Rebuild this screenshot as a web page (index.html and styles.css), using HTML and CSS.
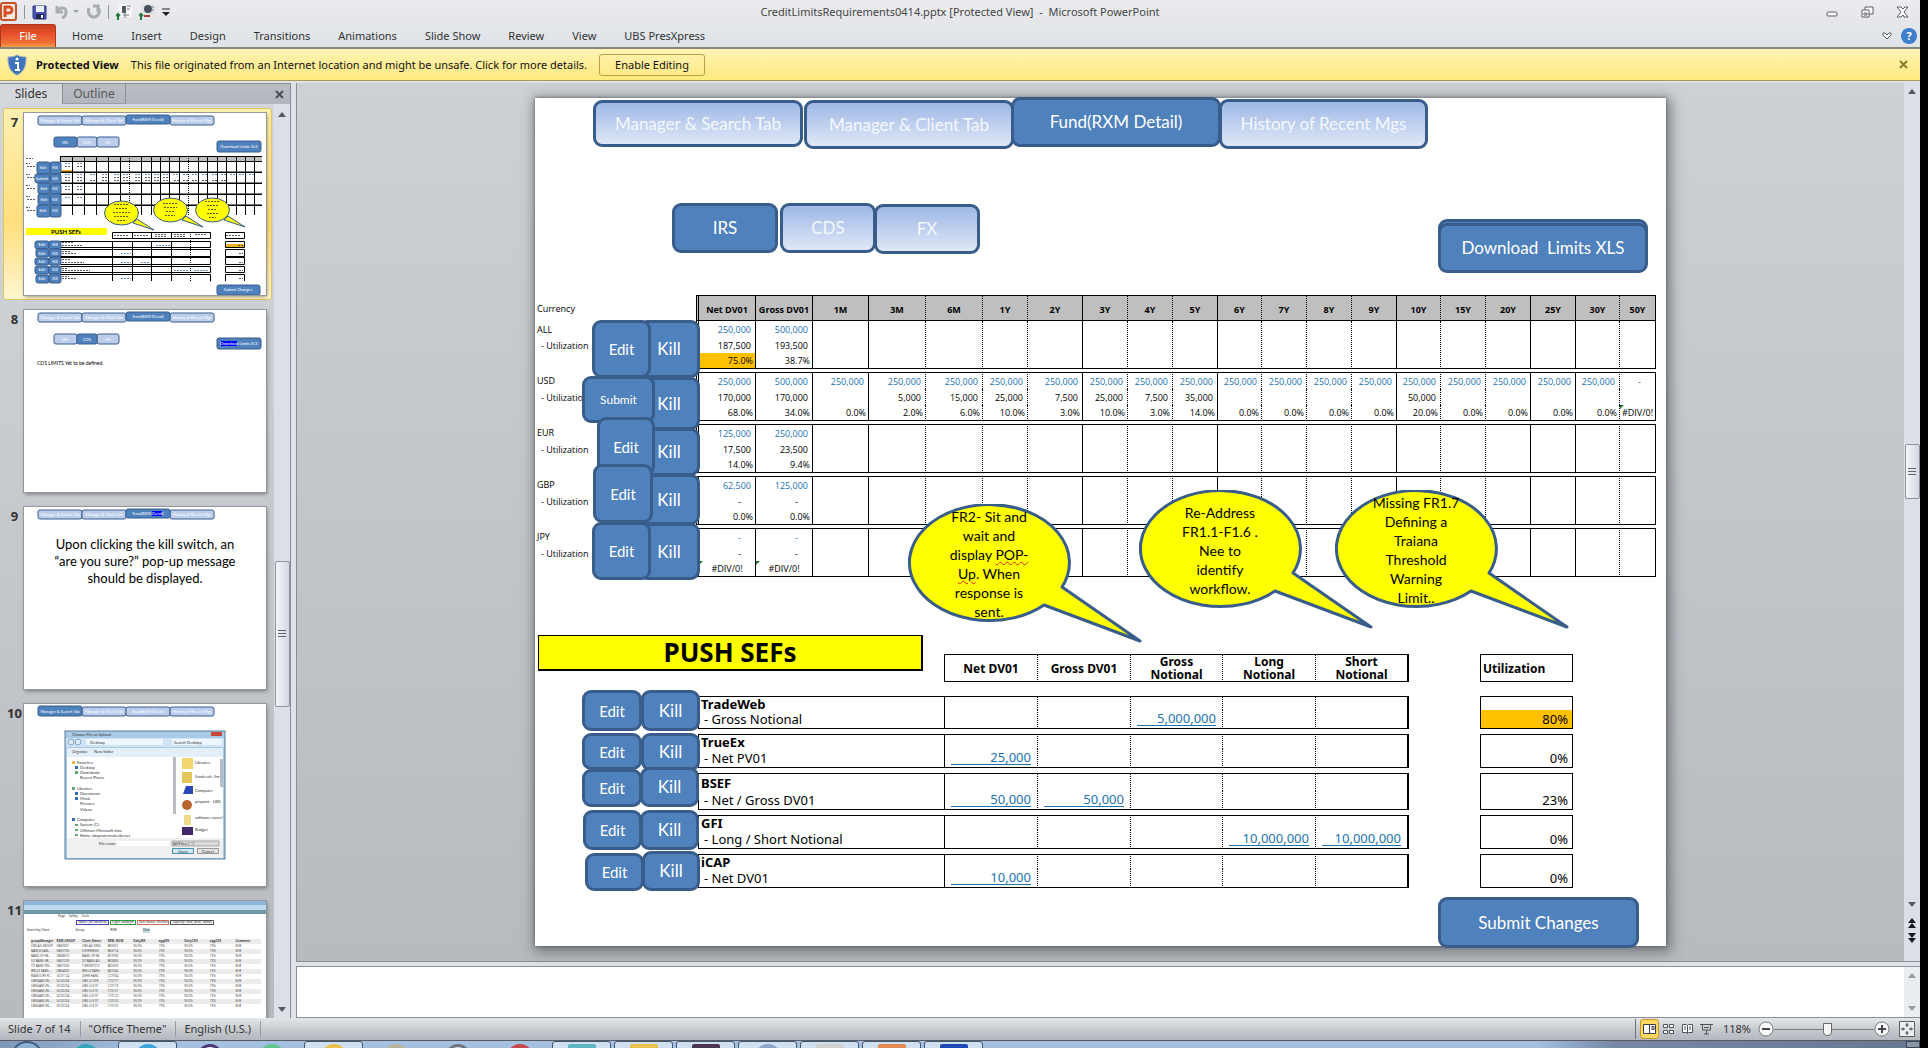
FILE: index.html
```html
<!DOCTYPE html>
<html lang="en">
<head>
<meta charset="utf-8">
<title>CreditLimitsRequirements0414.pptx [Protected View] - Microsoft PowerPoint</title>
<link rel="stylesheet" href="styles.css">
</head>
<body>
<div class="app">
  <header class="titlebar">
    <div class="quick">
      <svg class="logo" viewBox="0 0 17 20" width="17" height="20"><rect x="1" y="1" width="15" height="17" rx="2" fill="#fbe9df" stroke="#c3532a" stroke-width="2"/><path d="M5 15V5h4a3 3 0 0 1 0 6H6" fill="none" stroke="#d24f23" stroke-width="3"/></svg>
      <i class="bar"></i>
      <button type="button" aria-label="Save"><svg viewBox="0 0 15 15" width="15" height="15"><path d="M1 1h13v13H2l-1-1z" fill="#4a55b5" stroke="#2f3785"/><path d="M4 1h8v6H4z" fill="#eef1fb"/><path d="M4 9h8v5H4z" fill="#20264f"/><path d="M9 10h2v3H9z" fill="#fff"/></svg></button>
      <button type="button" aria-label="Undo"><svg viewBox="0 0 26 16" width="26" height="16"><path d="M3 2v6h6M3 8c3-6 10-5 9 1-0 2-2 4-4 5" fill="none" stroke="#a9acb1" stroke-width="3"/><path d="M19 6h6l-3 3z" fill="#9a9da2"/></svg></button>
      <button type="button" aria-label="Repeat"><svg viewBox="0 0 14 16" width="14" height="16"><path d="M2 4c-2 5 1 9 5 9s7-5 4-10M11 8V2h-5" fill="none" stroke="#a9acb1" stroke-width="3"/></svg></button>
      <i class="bar"></i>
      <button type="button" aria-label="Previous version"><svg viewBox="0 0 16 16" width="16" height="16"><path d="M3 0h13v13H3z" fill="#f6f6f6"/><path d="M6 2h4v7H6z" fill="#4d5963"/><path d="M11 2h4M11 5h3M7 11h6M9 9v5" stroke="#7c8288"/><path d="M2 16v-6M0 12l2-2 2 2" fill="none" stroke="#2a7a46" stroke-width="2"/></svg></button>
      <button type="button" aria-label="Next version"><svg viewBox="0 0 16 16" width="16" height="16"><path d="M3 0h13v13H3z" fill="#e3e3e3"/><circle cx="9" cy="5" r="4" fill="#46505a"/><path d="M12 3h3M12 6h3" stroke="#7c8288"/><path d="M5 12h6" stroke="#b53a34" stroke-width="2"/><path d="M2 16v-6M0 12l2-2 2 2" fill="none" stroke="#2a7a46" stroke-width="2"/></svg></button>
      <button type="button" aria-label="Customize toolbar"><svg viewBox="0 0 8 8" width="8" height="8"><path d="M0 1h8" stroke="#222"/><path d="M0 4h8L4 8z" fill="#222"/></svg></button>
    </div>
    <h1>CreditLimitsRequirements0414.pptx [Protected View]&nbsp; -&nbsp; Microsoft PowerPoint</h1>
    <div class="winctl">
      <button type="button" aria-label="Minimize"><svg viewBox="0 0 13 12" width="13" height="12"><rect x="1" y="6" width="10" height="4" rx="1" fill="#fff" stroke="#5a5e66"/></svg></button>
      <button type="button" aria-label="Restore"><svg viewBox="0 0 13 12" width="13" height="12"><path d="M4 1h8v7H4z" fill="#fff" stroke="#5a5e66"/><path d="M1 4h7v7H1z" fill="#fff" stroke="#5a5e66"/><path d="M3 7h3v2H3z" fill="#fff" stroke="#5a5e66"/></svg></button>
      <button type="button" aria-label="Close"><svg viewBox="0 0 13 12" width="13" height="12"><path d="M1 1h4l2 2 2-2h3L8 6l4 5H8L7 9l-2 2H1l4-5z" fill="#fff" stroke="#5a5e66"/></svg></button>
    </div>
  </header>

  <nav class="ribbon">
    <button type="button" class="file">File</button>
    <button type="button">Home</button>
    <button type="button">Insert</button>
    <button type="button">Design</button>
    <button type="button">Transitions</button>
    <button type="button">Animations</button>
    <button type="button">Slide Show</button>
    <button type="button">Review</button>
    <button type="button">View</button>
    <button type="button">UBS PresXpress</button>
    <div class="help">
      <svg viewBox="0 0 10 8" width="10" height="8"><path d="M1 1h2l2 2 2-2h2v2L5 7 1 3z" fill="#fff" stroke="#5a5e66"/></svg>
      <button type="button" class="q">?</button>
    </div>
  </nav>

  <section class="protected">
    <svg viewBox="0 0 20 22" width="20" height="22"><path d="M10 1c3 2 6 2 9 2 0 9-2 15-9 18C3 18 1 12 1 3c3 0 6 0 9-2z" fill="#3f74bd" stroke="#8fa6bf"/><path d="M8 9h3v7M8 16h5" fill="none" stroke="#fff" stroke-width="2"/><circle cx="10" cy="5" r="1.500" fill="#fff"/></svg>
    <strong>Protected View</strong>
    <span>This file originated from an Internet location and might be unsafe. Click for more details.</span>
    <button type="button">Enable Editing</button>
    <button type="button" class="x" aria-label="Close message"><svg viewBox="0 0 9 9" width="9" height="9"><path d="M1 1l7 7M8 1L1 8" stroke="#8a7d24" stroke-width="2"/></svg></button>
  </section>

  <div class="body">
    <aside class="panel">
      <div class="ptabs">
        <button type="button" class="on">Slides</button>
        <button type="button">Outline</button>
        <button type="button" class="x" aria-label="Close pane"><svg viewBox="0 0 9 9" width="9" height="9"><path d="M1 1l7 7M8 1L1 8" stroke="#4b4e53" stroke-width="2"/></svg></button>
      </div>
      <div class="pbody">
        <ol class="thumbs">
          <li class="sel"><b>7</b><a href="#slide7" aria-label="Slide 7">
            <svg viewBox="0 0 242 182" width="242" height="182">
              <g class="lt"><rect x="14" y="3" width="44" height="9" rx="2"/><rect x="58" y="3" width="44" height="9" rx="2"/><rect x="146" y="3" width="44" height="9" rx="2"/><rect x="53" y="24" width="20" height="10" rx="2"/><rect x="73" y="24" width="22" height="10" rx="2"/></g>
              <g class="dk"><rect x="102" y="2" width="44" height="9" rx="2"/><rect x="30" y="24" width="23" height="10" rx="2"/><rect x="193" y="28" width="44" height="11" rx="2"/><rect x="193" y="172" width="43" height="10" rx="2"/></g>
              <g class="tt"><text x="36" y="9">Manager &amp; Search Tab</text><text x="80" y="9">Manager &amp; Client Tab</text><text x="124" y="8">Fund(RXM Detail)</text><text x="168" y="9">History of Recent Mgs</text><text x="41" y="31">IRS</text><text x="63" y="31">CDS</text><text x="84" y="31">FX</text><text x="215" y="35">Download Limits XLS</text><text x="214" y="178">Submit Changes</text></g>
              <rect x="37" y="43" width="201" height="5" fill="#bfbfbf"/>
              <path d="M37 57h11v3H37z" fill="#f0b429"/>
              <path class="ln" d="M36 43.500h202M36 48.500h202M36 59.500h202M36 70.500h202M36 81.500h202M36 92.500h202M36.500 43v59M48.500 43v59M60.500 43v59M72.500 43v59M84.500 43v59M96.500 43v59M117.500 43v59M127.500 43v59M136.500 43v59M145.500 43v59M155.500 43v59M174.500 43v59M183.500 43v59M193.500 43v59M202.500 43v59M212.500 43v59M221.500 43v59M230.500 43v59"/>
              <path class="ln dots" d="M105.500 43v59M164.500 43v59"/>
              <path class="ln" d="M36 59h202M36 70h202M36 81h202M36 92h202"/>
              <path class="scr" d="M2 45.500h7M2 50.500h4M3 53.500h8M2 61.500h4M3 64.500h8M2 72.500h4M3 75.500h8M2 83.500h4M3 86.500h8M2 94.500h4M3 97.500h8M41 53.500h6M53 53.500h6M41 64.500h6M53 64.500h6M41 67.500h6M53 67.500h6M41 76.500h6M53 76.500h6M78 64.500h6M90 64.500h6M99 64.500h6M111 64.500h6M121 64.500h6M130 64.500h6M139 64.500h6M66 67.500h6M78 67.500h6M90 67.500h6M99 67.500h6M111 67.500h6M121 67.500h6M130 67.500h6M139 67.500h6M150 67.500h5M159 67.500h5M168 67.500h5M178 67.500h5M188 67.500h5M197 67.500h5"/>
              <path class="scb" d="M41 50.500h6M53 50.500h6M41 61.500h6M53 61.500h6M66 61.500h6M78 61.500h6M90 61.500h6M99 61.500h6M111 61.500h6M121 61.500h6M130 61.500h6M139 61.500h6M149 61.500h6M159 61.500h5M168 61.500h5M178 61.500h5M188 61.500h5M197 61.500h5M206 61.500h5M215 61.500h5M225 61.500h5M41 73.500h6M53 73.500h6M41 84.500h6M53 84.500h6"/>
              <g class="dk"><rect x="26" y="49" width="11" height="12" rx="2"/><rect x="13" y="49" width="13" height="12" rx="2"/><rect x="26" y="61" width="11" height="10" rx="2"/><rect x="11" y="61" width="15" height="9" rx="2"/><rect x="26" y="71" width="11" height="10" rx="2"/><rect x="14" y="70" width="12" height="11" rx="2"/><rect x="26" y="81" width="11" height="11" rx="2"/><rect x="14" y="81" width="12" height="11" rx="2"/><rect x="26" y="92" width="11" height="12" rx="2"/><rect x="13" y="92" width="13" height="12" rx="2"/></g>
              <g class="tt"><text x="19" y="56">Edit</text><text x="31" y="56">Kill</text><text x="18" y="67">Submit</text><text x="31" y="67">Kill</text><text x="20" y="77">Edit</text><text x="31" y="77">Kill</text><text x="20" y="88">Edit</text><text x="31" y="88">Kill</text><text x="19" y="99">Edit</text><text x="31" y="99">Kill</text></g>
              <g class="yl"><path d="M113 106l17 11-21-7z"/><ellipse cx="97.500" cy="100" rx="17" ry="12"/><path d="M162 103l17 11-21-7z"/><ellipse cx="146.500" cy="97" rx="17" ry="12"/><path d="M204 103l17 11-21-7z"/><ellipse cx="188.500" cy="97" rx="17" ry="12"/></g>
              <path class="scr" d="M90 91.500h15M92 95.500h11M89 99.500h17M90 103.500h14M93 107.500h8M139 90.500h14M140 94.500h13M142 98.500h9M141 102.500h10M181 88.500h15M183 92.500h11M184 96.500h9M183 100.500h11M185 104.500h7"/>
              <rect x="2" y="115" width="81" height="7" fill="#ff0"/>
              <text class="push" x="42" y="121">PUSH SEFs</text>
              <path class="ln" d="M88.500 119.500h98v6h-98zM108.500 119v6M127.500 119v6M147.500 119v6M201.500 119.500h19v6h-19zM36.500 128.500h150v6h-150zM36.500 136.500h150v7h-150zM36.500 144.500h150v7h-150zM36.500 153.500h150v6h-150zM36.500 161.500h150v7M36.500 161v7M88.500 128v40M108.500 128v40M127.500 128v40M147.500 128v40M201.500 128.500h19v6h-19zM201.500 136.500h19v7h-19zM201.500 144.500h19v7h-19zM201.500 153.500h19v6h-19zM201.500 168v-6.500h19v6.500"/>
              <path class="ln dots" d="M166.500 119v49"/>
              <path d="M202 131h18v3h-18z" fill="#f0b429"/>
              <path class="scr" d="M90 122.500h14M110 122.500h15M131 121.500h11M131 123.500h11M150 121.500h12M150 123.500h12M171 121.500h12M202 122.500h14M38 129.500h12M38 132.500h20M38 138.500h9M38 140.500h14M38 146.500h8M38 149.500h22M38 155.500h6M38 157.500h28M38 163.500h7M38 165.500h14M214 132.500h5M215 140.500h4M215 149.500h4M215 157.500h4M215 165.500h4"/>
              <path class="scb" d="M132 132.500h14M97 140.500h10M97 149.500h10M117 149.500h9M150 157.500h15M170 157.500h15M97 165.500h10"/>
              <g class="dk"><rect x="11" y="128" width="14" height="8" rx="2"/><rect x="25" y="128" width="12" height="8" rx="2"/><rect x="12" y="136" width="13" height="8" rx="2"/><rect x="25" y="136" width="12" height="8" rx="2"/><rect x="11" y="145" width="14" height="7" rx="2"/><rect x="25" y="144" width="12" height="8" rx="2"/><rect x="11" y="153" width="14" height="8" rx="2"/><rect x="25" y="153" width="12" height="8" rx="2"/><rect x="12" y="162" width="13" height="8" rx="2"/><rect x="25" y="161" width="12" height="9" rx="2"/></g>
              <g class="tt"><text x="18" y="133">Edit</text><text x="31" y="133">Kill</text><text x="18" y="142">Edit</text><text x="31" y="142">Kill</text><text x="18" y="150">Edit</text><text x="31" y="150">Kill</text><text x="18" y="158">Edit</text><text x="31" y="158">Kill</text><text x="18" y="167">Edit</text><text x="31" y="167">Kill</text></g>
            </svg></a></li>
          <li><b>8</b><a href="#slide8" aria-label="Slide 8">
            <svg viewBox="0 0 242 182" width="242" height="182">
              <g class="lt"><rect x="14" y="3" width="44" height="9" rx="2"/><rect x="58" y="3" width="44" height="9" rx="2"/><rect x="146" y="3" width="44" height="9" rx="2"/><rect x="30" y="24" width="23" height="10" rx="2"/><rect x="73" y="24" width="22" height="10" rx="2"/></g>
              <g class="dk"><rect x="102" y="2" width="44" height="9" rx="2"/><rect x="53" y="24" width="20" height="10" rx="2"/><rect x="193" y="28" width="44" height="11" rx="2"/></g>
              <path d="M197 31h16v5h-16z" fill="#00f"/>
              <g class="tt"><text x="36" y="9">Manager &amp; Search Tab</text><text x="80" y="9">Manager &amp; Client Tab</text><text x="124" y="8">Fund(RXM Detail)</text><text x="168" y="9">History of Recent Mgs</text><text x="41" y="31">IRS</text><text x="63" y="31">CDS</text><text x="84" y="31">FX</text><text x="215" y="35">Download Limits XLS</text></g>
              <text class="note" x="13" y="55">CDS LIMITS Yet to be defined.</text>
            </svg></a></li>
          <li><b>9</b><a href="#slide9" aria-label="Slide 9">
            <svg viewBox="0 0 242 182" width="242" height="182">
              <g class="lt"><rect x="14" y="3" width="44" height="9" rx="2"/><rect x="58" y="3" width="44" height="9" rx="2"/><rect x="146" y="3" width="44" height="9" rx="2"/></g>
              <g class="dk"><rect x="102" y="2" width="44" height="9" rx="2"/></g>
              <path d="M128 4h10v5h-10z" fill="#00f"/>
              <g class="tt"><text x="36" y="9">Manager &amp; Search Tab</text><text x="80" y="9">Manager &amp; Client Tab</text><text x="124" y="8">Fund(RXM Detail)</text><text x="168" y="9">History of Recent Mgs</text></g>
              <g class="kill"><text x="121" y="42">Upon clicking the kill switch, an</text><text x="121" y="59">“are you sure?” pop-up message</text><text x="121" y="76">should be displayed.</text></g>
            </svg></a></li>
          <li><b>10</b><a href="#slide10" aria-label="Slide 10">
            <svg viewBox="0 0 242 182" width="242" height="182">
              <g class="lt"><rect x="58" y="3" width="44" height="9" rx="2"/><rect x="102" y="3" width="44" height="9" rx="2"/><rect x="146" y="3" width="44" height="9" rx="2"/></g>
              <g class="dk"><rect x="14" y="2" width="44" height="10" rx="2"/></g>
              <g class="tt"><text x="36" y="9">Manager &amp; Search Tab</text><text x="80" y="9">Manager &amp; Client Tab</text><text x="124" y="9">Fund(RXM Detail)</text><text x="168" y="9">History of Recent Mgs</text></g>
              <rect x="41" y="27" width="160" height="128" fill="#a9cbe8" stroke="#5c7c98"/>
              <path d="M42 34h158v9H42z" fill="#cfe3f5"/><path d="M62 35h77v6H62zM148 35h50v6h-50z" fill="#eef6fd"/>
              <path d="M43 44h156v9H43z" fill="#e4eef9"/><path d="M43 53h156v81H43z" fill="#fff"/><path d="M43 134h156v20H43z" fill="#f0f0f0"/>
              <path d="M187 28h11v4h-11z" fill="#c8473a"/><circle cx="47" cy="38" r="3" fill="#dbe9f6" stroke="#89a5c2"/><circle cx="54" cy="38" r="3" fill="#dbe9f6" stroke="#89a5c2"/>
              <path d="M150.500 53v57M197.500 55v28" stroke="#b9bcc0" stroke-width="3"/>
              <path d="M158 54h11v11h-11z" fill="#f0d66d"/><path d="M158 68h10v11h-10z" fill="#e3c65a"/><path d="M162 82h7v8h-10z" fill="#2848b8"/><circle cx="163" cy="101" r="5" fill="#b8662d"/><path d="M160 111h7v10h-7z" fill="#f0d98b"/><path d="M158 123h11v8h-11z" fill="#43256b"/>
              <path d="M48 57h3v3h-3z" fill="#f0b84a"/><path d="M51 62h3v3h-3zM51 88h3v3h-3zM51 93h3v3h-3zM48 114h3v3h-3z" fill="#356ab5"/><path d="M51 67h3v3h-3zM48 83h3v3h-3zM51 120h3v2h-3zM51 125h3v2h-3zM51 130h3v2h-3z" fill="#62a877"/>
              <path d="M91 137h54v5H91z" fill="#fff"/><path d="M148 137h47v5h-47z" fill="#d9d9d9" stroke="#aaa"/><path d="M148.500 144.500h21v5h-21z" fill="#cfe8f5" stroke="#4992ae"/><path d="M173.500 144.500h21v5h-21z" fill="#e3e3e3" stroke="#999"/>
              <g class="dlg"><text x="48" y="32">Choose File to Upload</text><text x="66" y="40">Desktop</text><text x="150" y="40">Search Desktop</text><text x="48" y="49">Organize</text><text x="70" y="49">New folder</text><text x="53" y="60">Favorites</text><text x="56" y="65">Desktop</text><text x="56" y="70">Downloads</text><text x="56" y="75">Recent Places</text><text x="53" y="86">Libraries</text><text x="56" y="91">Documents</text><text x="56" y="96">Music</text><text x="56" y="101">Pictures</text><text x="56" y="107">Videos</text><text x="53" y="117">Computer</text><text x="56" y="122">System (C:)</text><text x="56" y="128">Offshare Microsoft data</text><text x="56" y="133">Home ubsprod.msad.ubs.net</text><text x="171" y="60">Libraries</text><text x="171" y="74">Sandeesh, Jim</text><text x="171" y="88">Computer</text><text x="171" y="99">pinpoint - UBS</text><text x="171" y="115">software cancel</text><text x="171" y="127">Budget</text><text x="75" y="141">File name:</text><text x="149" y="141">All Files (*.*)</text><text x="154" y="149">Open</text><text x="178" y="149">Cancel</text></g>
            </svg></a></li>
          <li><b>11</b><a href="#slide11" class="shot" aria-label="Slide 11">
            <span class="s-title"></span><span class="s-addr"></span><span class="s-tabs"></span>
            <span class="s-tools"><i>Page</i><i>Safety</i><i>Tools</i></span>
            <span class="s-chips"><i>Name: Jim Swiderski</i><i>Login: swidejim</i><i>User Status: Verified</i><i>Capacity: read, write, admin</i></span>
            <span class="s-find"><i>Search by Client</i><i>Group</i><i>RXM</i><i class="go">Clear</i></span>
            <table>
              <tr><th>groupManager</th><th>RXM_GROUP</th><th>Client_Name</th><th>RXM_NUM</th><th>DailyIRS</th><th>aggIRS</th><th>DailyCDS</th><th>aggCDS</th><th>Comment</th></tr>
              <tr><td>UBS AG GROUP</td><td>GB00001</td><td>UBS AG SING</td><td>B00001</td><td>90.0%</td><td>73%</td><td>90.0%</td><td>73%</td><td>EUR</td></tr>
              <tr><td>BANCO SAN...</td><td>GB07700</td><td>SOVEREIGN</td><td>B03714</td><td>90.0%</td><td>73%</td><td>90.0%</td><td>73%</td><td>EUR</td></tr>
              <tr><td>BANK OF NE...</td><td>GB08010</td><td>BANK OF NE</td><td>B13760</td><td>90.0%</td><td>73%</td><td>90.0%</td><td>73%</td><td>EUR</td></tr>
              <tr><td>DZ BANK GR...</td><td>GB01200</td><td>DZ BANK AG</td><td>B09060</td><td>90.0%</td><td>73%</td><td>90.0%</td><td>73%</td><td>EUR</td></tr>
              <tr><td>TD BANK FIN...</td><td>GB01000</td><td>TORONTO D</td><td>B05059</td><td>90.0%</td><td>73%</td><td>90.0%</td><td>73%</td><td>EUR</td></tr>
              <tr><td>WELLS FARG...</td><td>GB04000</td><td>WELLS FARG</td><td>B07240</td><td>90.0%</td><td>73%</td><td>90.0%</td><td>73%</td><td>EUR</td></tr>
              <tr><td>MANULIFE FI...</td><td>GC01124</td><td>JOHN HANC</td><td>C27534</td><td>90.0%</td><td>73%</td><td>90.0%</td><td>73%</td><td>EUR</td></tr>
              <tr><td>UBSGAM UN...</td><td>GC02234</td><td>UBS LU STR</td><td>C10117</td><td>90.0%</td><td>73%</td><td>90.0%</td><td>73%</td><td>EUR</td></tr>
              <tr><td>UBSGAM UN...</td><td>GC02234</td><td>UBS LUX ST</td><td>C10119</td><td>90.0%</td><td>73%</td><td>90.0%</td><td>73%</td><td>EUR</td></tr>
              <tr><td>UBSGAM UN...</td><td>GC02234</td><td>UBS LUX ST</td><td>C10121</td><td>90.0%</td><td>73%</td><td>90.0%</td><td>73%</td><td>EUR</td></tr>
              <tr><td>UBSGAM UN...</td><td>GC02234</td><td>UBS LUX ST</td><td>C10122</td><td>90.0%</td><td>73%</td><td>90.0%</td><td>73%</td><td>EUR</td></tr>
              <tr><td>UBSGAM UN...</td><td>GC02234</td><td>UBS LUX ST</td><td>C10123</td><td>90.0%</td><td>73%</td><td>90.0%</td><td>73%</td><td>EUR</td></tr>
              <tr><td>UBSGAM UN...</td><td>GC02234</td><td>UBS LUX ST</td><td>C10125</td><td>90.0%</td><td>73%</td><td>90.0%</td><td>73%</td><td>EUR</td></tr>
            </table></a></li>
        </ol>
        <div class="sbar"><i class="up"></i><i class="grow-a"></i><i class="knob"></i><i class="grow-b"></i><i class="down"></i></div>
      </div>
    </aside>

    <main class="work">
      <div class="stage">
        <div class="desk">
          <article class="slide" id="slide7">
            <button type="button" class="shape light t1">Manager &amp; Search Tab</button>
            <button type="button" class="shape light t2">Manager &amp; Client Tab</button>
            <button type="button" class="shape light t4">History of Recent Mgs</button>
            <button type="button" class="shape t3">Fund(RXM Detail)</button>
            <button type="button" class="shape p1">IRS</button>
            <button type="button" class="shape light p2">CDS</button>
            <button type="button" class="shape light p3">FX</button>
            <span class="shape dl-back"></span>
            <button type="button" class="shape dl">Download&nbsp; Limits XLS</button>

            <table class="limits">
              <colgroup><col class="c159"><col class="c60"><col class="c57"><col class="c56"><col class="c57"><col class="c57"><col class="c45"><col class="c55"><col class="c45"><col class="c45"><col class="c45"><col class="c44"><col class="c45"><col class="c45"><col class="c45"><col class="c44"><col class="c45"><col class="c45"><col class="c45"><col class="c44"><col class="c36"></colgroup>
              <thead><tr><th>Currency</th><th>Net DV01</th><th>Gross DV01</th><th>1M</th><th>3M</th><th>6M</th><th>1Y</th><th>2Y</th><th>3Y</th><th>4Y</th><th>5Y</th><th>6Y</th><th>7Y</th><th>8Y</th><th>9Y</th><th>10Y</th><th>15Y</th><th>20Y</th><th>25Y</th><th>30Y</th><th>50Y</th></tr></thead>
              <tbody>
                <tr class="lim"><th>ALL</th><td>250,000</td><td>500,000</td><td rowspan="3"></td><td rowspan="3"></td><td rowspan="3"></td><td rowspan="3"></td><td rowspan="3"></td><td rowspan="3"></td><td rowspan="3"></td><td rowspan="3"></td><td rowspan="3"></td><td rowspan="3"></td><td rowspan="3"></td><td rowspan="3"></td><td rowspan="3"></td><td rowspan="3"></td><td rowspan="3"></td><td rowspan="3"></td><td rowspan="3"></td><td rowspan="3"></td></tr>
                <tr><th class="sub">- Utilization</th><td>187,500</td><td>193,500</td></tr>
                <tr class="pct"><th></th><td class="warn">75.0%</td><td>38.7%</td></tr>
              </tbody>
              <tbody>
                <tr class="gap"><td colspan="21"></td></tr>
                <tr class="lim"><th>USD</th><td>250,000</td><td>500,000</td><td>250,000</td><td>250,000</td><td>250,000</td><td>250,000</td><td>250,000</td><td>250,000</td><td>250,000</td><td>250,000</td><td>250,000</td><td>250,000</td><td>250,000</td><td>250,000</td><td>250,000</td><td>250,000</td><td>250,000</td><td>250,000</td><td>250,000</td><td class="dash">-</td></tr>
                <tr><th class="sub">- Utilization</th><td>170,000</td><td>170,000</td><td></td><td>5,000</td><td>15,000</td><td>25,000</td><td>7,500</td><td>25,000</td><td>7,500</td><td>35,000</td><td></td><td></td><td></td><td></td><td>50,000</td><td></td><td></td><td></td><td></td><td></td></tr>
                <tr class="pct"><th></th><td>68.0%</td><td>34.0%</td><td>0.0%</td><td>2.0%</td><td>6.0%</td><td>10.0%</td><td>3.0%</td><td>10.0%</td><td>3.0%</td><td>14.0%</td><td>0.0%</td><td>0.0%</td><td>0.0%</td><td>0.0%</td><td>20.0%</td><td>0.0%</td><td>0.0%</td><td>0.0%</td><td>0.0%</td><td class="err">#DIV/0!</td></tr>
              </tbody>
              <tbody>
                <tr class="gap"><td colspan="21"></td></tr>
                <tr class="lim"><th>EUR</th><td>125,000</td><td>250,000</td><td rowspan="3"></td><td rowspan="3"></td><td rowspan="3"></td><td rowspan="3"></td><td rowspan="3"></td><td rowspan="3"></td><td rowspan="3"></td><td rowspan="3"></td><td rowspan="3"></td><td rowspan="3"></td><td rowspan="3"></td><td rowspan="3"></td><td rowspan="3"></td><td rowspan="3"></td><td rowspan="3"></td><td rowspan="3"></td><td rowspan="3"></td><td rowspan="3"></td></tr>
                <tr><th class="sub">- Utilization</th><td>17,500</td><td>23,500</td></tr>
                <tr class="pct"><th></th><td>14.0%</td><td>9.4%</td></tr>
              </tbody>
              <tbody>
                <tr class="gap"><td colspan="21"></td></tr>
                <tr class="lim"><th>GBP</th><td>62,500</td><td>125,000</td><td rowspan="3"></td><td rowspan="3"></td><td rowspan="3"></td><td rowspan="3"></td><td rowspan="3"></td><td rowspan="3"></td><td rowspan="3"></td><td rowspan="3"></td><td rowspan="3"></td><td rowspan="3"></td><td rowspan="3"></td><td rowspan="3"></td><td rowspan="3"></td><td rowspan="3"></td><td rowspan="3"></td><td rowspan="3"></td><td rowspan="3"></td><td rowspan="3"></td></tr>
                <tr><th class="sub">- Utilization</th><td class="dash">-</td><td class="dash">-</td></tr>
                <tr class="pct"><th></th><td>0.0%</td><td>0.0%</td></tr>
              </tbody>
              <tbody>
                <tr class="gap"><td colspan="21"></td></tr>
                <tr class="lim"><th>JPY</th><td class="dash">-</td><td class="dash">-</td><td rowspan="3"></td><td rowspan="3"></td><td rowspan="3"></td><td rowspan="3"></td><td rowspan="3"></td><td rowspan="3"></td><td rowspan="3"></td><td rowspan="3"></td><td rowspan="3"></td><td rowspan="3"></td><td rowspan="3"></td><td rowspan="3"></td><td rowspan="3"></td><td rowspan="3"></td><td rowspan="3"></td><td rowspan="3"></td><td rowspan="3"></td><td rowspan="3"></td></tr>
                <tr><th class="sub">- Utilization</th><td class="dash">-</td><td class="dash">-</td></tr>
                <tr class="pct"><th></th><td class="err">#DIV/0!</td><td class="err">#DIV/0!</td></tr>
              </tbody>
            </table>

            <button type="button" class="shape kill k1">Kill</button>
            <button type="button" class="shape kill k2">Kill</button>
            <button type="button" class="shape kill k3">Kill</button>
            <button type="button" class="shape kill k4">Kill</button>
            <button type="button" class="shape kill k5">Kill</button>
            <button type="button" class="shape edit e1">Edit</button>
            <button type="button" class="shape submit e2">Submit</button>
            <button type="button" class="shape edit e3">Edit</button>
            <button type="button" class="shape edit e4">Edit</button>
            <button type="button" class="shape edit e5">Edit</button>

            <h2 class="push">PUSH SEFs</h2>

            <table class="sefs">
              <colgroup><col class="c247"><col class="c93"><col class="c93"><col class="c92"><col class="c93"><col class="c93"><col class="c72"><col class="c92"></colgroup>
              <thead>
                <tr><td></td><th>Net DV01</th><th>Gross DV01</th><th>Gross<br>Notional</th><th>Long<br>Notional</th><th>Short<br>Notional</th><td></td><th class="util">Utilization</th></tr>
                <tr class="gap tall"><td colspan="8"></td></tr>
              </thead>
              <tbody>
                <tr class="n1"><th>TradeWeb</th><td></td><td></td><td></td><td></td><td></td><td></td><td></td></tr>
                <tr><td>- Gross Notional</td><td></td><td></td><td><span>5,000,000</span></td><td></td><td></td><td></td><td class="warn">80%</td></tr>
                <tr class="gap"><td colspan="8"></td></tr>
                <tr class="n2"><th>TrueEx</th><td></td><td></td><td></td><td></td><td></td><td></td><td></td></tr>
                <tr><td>- Net PV01</td><td><span>25,000</span></td><td></td><td></td><td></td><td></td><td></td><td>0%</td></tr>
                <tr class="gap"><td colspan="8"></td></tr>
                <tr class="n3"><th>BSEF</th><td></td><td></td><td></td><td></td><td></td><td></td><td></td></tr>
                <tr><td>- Net / Gross DV01</td><td><span>50,000</span></td><td><span>50,000</span></td><td></td><td></td><td></td><td></td><td>23%</td></tr>
                <tr class="gap"><td colspan="8"></td></tr>
                <tr class="n2"><th>GFI</th><td></td><td></td><td></td><td></td><td></td><td></td><td></td></tr>
                <tr><td>- Long / Short Notional</td><td></td><td></td><td></td><td><span>10,000,000</span></td><td><span>10,000,000</span></td><td></td><td>0%</td></tr>
                <tr class="gap"><td colspan="8"></td></tr>
                <tr class="n2"><th>iCAP</th><td></td><td></td><td></td><td></td><td></td><td></td><td></td></tr>
                <tr><td>- Net DV01</td><td><span>10,000</span></td><td></td><td></td><td></td><td></td><td></td><td>0%</td></tr>
              </tbody>
            </table>

            <button type="button" class="shape edit f1">Edit</button>
            <button type="button" class="shape kill g1">Kill</button>
            <button type="button" class="shape edit f2">Edit</button>
            <button type="button" class="shape kill g2">Kill</button>
            <button type="button" class="shape edit f3">Edit</button>
            <button type="button" class="shape kill g3">Kill</button>
            <button type="button" class="shape edit f4">Edit</button>
            <button type="button" class="shape kill g4">Kill</button>
            <button type="button" class="shape edit f5">Edit</button>
            <button type="button" class="shape kill g5">Kill</button>

            <div class="callout a">
              <svg viewBox="0 0 236 142" width="236" height="142"><path d="M154 83L232 137 136 101A80 58 0 1 1 154 83z"/></svg>
              <div class="words"><p>FR2- Sit and<br>wait and<br>display <u>POP-</u><br><u>Up</u>. When<br>response is<br>sent.</p></div>
            </div>
            <div class="callout b">
              <svg viewBox="0 0 236 142" width="236" height="142"><path d="M154 83L232 137 136 101A80 58 0 1 1 154 83z"/></svg>
              <div class="words"><p>Re-Address<br>FR1.1-F1.6 .<br>Nee to<br>identify<br>workflow.</p></div>
            </div>
            <div class="callout c">
              <svg viewBox="0 0 236 142" width="236" height="142"><path d="M154 83L232 137 136 101A80 58 0 1 1 154 83z"/></svg>
              <div class="words"><p>Missing FR1.7<br>Defining a<br>Traiana<br>Threshold<br>Warning<br>Limit..</p></div>
            </div>
            <button type="button" class="shape save">Submit Changes</button>
          </article>
        </div>
        <div class="sbar main"><i class="up"></i><i class="grow-a"></i><i class="knob"></i><i class="grow-b"></i><i class="down"></i>
          <svg viewBox="0 0 10 28" width="10" height="28"><path d="M5 1l4 5H1zM5 6l4 5H1zM1 16h8l-4 5zM1 21h8l-4 5z" fill="#16181b"/></svg></div>
      </div>
      <div class="notes">
        <textarea aria-label="Notes"></textarea>
        <div class="sbar dim"><i class="up"></i><i class="down"></i></div>
      </div>
    </main>
  </div>

  <footer class="status">
    <span>Slide 7 of 14</span><span>"Office Theme"</span><span>English (U.S.)</span>
    <div class="views">
      <button type="button" class="on" aria-label="Normal"><svg viewBox="0 0 13 12" width="13" height="12"><path d="M.500 1.500h12v9H.500z" fill="#fff" stroke="#3c3f45"/><path d="M6.500 1v10M9 3.500h2v3H9z" fill="none" stroke="#3c3f45"/></svg></button>
      <button type="button" aria-label="Slide sorter"><svg viewBox="0 0 13 12" width="13" height="12"><path d="M1.500 1.500h4v3h-4zM7.500 1.500h4v3h-4zM1.500 7.500h4v3h-4zM7.500 7.500h4v3h-4z" fill="#fff" stroke="#50545a"/></svg></button>
      <button type="button" aria-label="Reading view"><svg viewBox="0 0 13 12" width="13" height="12"><path d="M1.500 1.500h4l1 1 1-1h4v8h-4l-1 1-1-1h-4zM6.500 2v9M3 4h2M3 6h2M8 4h2M8 6h2" fill="#fff" stroke="#50545a"/></svg></button>
      <button type="button" aria-label="Slide show"><svg viewBox="0 0 13 12" width="13" height="12"><path d="M0 1.500h13M2.500 2v5h8V2M6.500 7v4M4 11h5M4 4.500h5" fill="none" stroke="#50545a"/></svg></button>
    </div>
    <output>118%</output>
    <div class="zoom">
      <button type="button" aria-label="Zoom out"><svg viewBox="0 0 16 16" width="16" height="16"><circle cx="8" cy="8" r="7" fill="#fafafa" stroke="#777b82"/><path d="M4 8h8" stroke="#44484e" stroke-width="2"/></svg></button>
      <input type="range" min="0" max="100" value="54" aria-label="Zoom">
      <button type="button" aria-label="Zoom in"><svg viewBox="0 0 16 16" width="16" height="16"><circle cx="8" cy="8" r="7" fill="#fafafa" stroke="#777b82"/><path d="M4 8h8M8 4v8" stroke="#44484e" stroke-width="2"/></svg></button>
    </div>
    <button type="button" class="fit" aria-label="Fit slide to window"><svg viewBox="0 0 16 16" width="16" height="16"><path d="M.500.500h15v15H.500z" fill="#eceef0" stroke="#5a5e64"/><path d="M8 2v4M8 10v4M2 8h4M10 8h4M6.500 4h3M6.500 12h3M4 6.500v3M12 6.500v3" stroke="#3c4046"/></svg></button>
  </footer>

  <div class="taskbar">
    <i class="orb"></i>
    <i class="item"><b class="teal"></b></i><i class="item on"><b class="cyan"></b></i><i class="item"><b class="violet"></b></i><i class="item"><b class="green"></b></i><i class="item on"><b class="gold"></b></i><i class="item"><b class="sand"></b></i><i class="item"><b class="grey"></b></i><i class="item"><b class="red"></b></i><i class="item on"><b class="sheet aqua"></b></i><i class="item on"><b class="sheet gold"></b></i><i class="item on"><b class="sheet plum"></b></i><i class="item on"><b class="haze"></b></i><i class="item on"><b class="sheet pad"></b></i><i class="item on"><b class="sheet rust"></b></i><i class="item on"><b class="sheet blue"></b></i>
    <i class="peek"></i>
  </div>
</div>
</body>
</html>
```

FILE: styles.css
```css
* { box-sizing: border-box; }
html, body { height: 100%; margin: 0; }
body {
  background: #000;
  padding-right: 8px;
  font: 11px/16px "Noto Sans", "Open Sans", sans-serif;
  color: #333;
  overflow: hidden;
}
button {
  font: inherit;
  color: inherit;
  background: none;
  border: 0;
  padding: 0;
  margin: 0;
}
svg { display: block; }
h1, h2, p { margin: 0; }

.app { display: flex; flex-direction: column; height: 100%; background: #dfe3e7; }

/* title bar and ribbon */
.titlebar {
  display: grid;
  grid-template-columns: 1fr auto 1fr;
  align-items: center;
  height: 24px;
  background: linear-gradient(#ebecef, #e4e6ea);
}
.titlebar h1 { font-size: 11px; font-weight: 400; color: #444; }
.quick { display: flex; align-items: center; gap: 7px; }
.quick .bar { width: 1px; height: 14px; background: #8e9196; }
.winctl { display: flex; justify-content: flex-end; gap: 22px; padding-right: 11px; }

.ribbon {
  display: flex;
  align-items: stretch;
  gap: 28px;
  height: 25px;
  background: linear-gradient(#e4e6ea, #dfe4e8);
  border-bottom: 2px solid #85857a;
}
.ribbon .file {
  width: 56px;
  margin-right: -12px;
  color: #fff;
  background: linear-gradient(#c8401f, #e8502c 40%, #f0703a 80%, #f7a046);
  border: 1px solid #b03818;
  border-bottom: 0;
  border-radius: 3px 3px 0 0;
}
.help { margin-left: auto; display: flex; align-items: center; gap: 9px; padding-right: 3px; }
.help .q {
  width: 16px; height: 16px;
  border-radius: 8px;
  background: #3f7ccb;
  color: #fff;
  font-weight: 700;
  line-height: 16px;
}

.protected {
  display: flex;
  align-items: center;
  height: 32px;
  padding: 0 12px 0 7px;
  background: linear-gradient(#fff3b4, #ffe97f);
  border-bottom: 1px solid #a89b52;
  color: #111;
}
.protected strong { margin: 0 12px 0 9px; }
.protected button {
  height: 22px;
  margin-left: 12px;
  padding: 0 15px;
  border: 1px solid #b5a04a;
  border-radius: 3px;
}
.protected .x { margin-left: auto; padding: 0; border: 0; }

/* body */
.body { flex: 1; min-height: 0; display: flex; gap: 5px; padding-top: 2px; }

.panel {
  flex: none;
  width: 291px;
  display: flex;
  flex-direction: column;
  border: 1px solid #8b8f95;
  border-left: 0;
  border-bottom: 0;
}
.ptabs {
  display: flex;
  height: 20px;
  background: linear-gradient(#babec4, #b2b6bc);
  font-size: 12px;
  color: #55585d;
}
.ptabs button { width: 63px; border-right: 1px solid #8b8f95; border-bottom: 1px solid #9a9ea4; }
.ptabs .on { background: #d4d7db; color: #333; border-bottom: 0; }
.ptabs .x { width: 9px; margin: 0 6px 0 auto; border: 0; }
.pbody {
  flex: 1;
  min-height: 0;
  display: flex;
  justify-content: space-between;
  background: linear-gradient(#d2d5d9, #b7babf);
}
.thumbs {
  list-style: none;
  margin: 0;
  padding: 4px 0 0 3px;
  overflow: hidden;
}
.thumbs li {
  display: flex;
  height: 192px;
  margin-bottom: 5px;
  padding: 4px 5px 4px 1px;
  border: 1px solid transparent;
  border-radius: 3px;
}
.thumbs .sel { background: linear-gradient(#fff0b0, #ffdf7d 60%, #fff6d0); border-color: #e3c45f; }
.thumbs b { width: 19px; text-align: center; font-size: 13px; line-height: 18px; }
.thumbs a {
  display: block;
  width: 242px;
  height: 182px;
  background: #fff;
  outline: 1px solid #94979c;
  box-shadow: 1px 2px 4px rgba(0, 0, 0, .4);
  color: #222;
  text-decoration: none;
}
.thumbs text { font-family: Lato, sans-serif; }
.lt rect { fill: #bccdec; stroke: #385d8a; }
.dk rect { fill: #4f81bd; stroke: #385d8a; }
.tt text { fill: #fff; font-size: 4px; text-anchor: middle; }
.ln { fill: none; stroke: #000; }
.dots { stroke-dasharray: 1 1; }
.scr, .scb { fill: none; stroke: #333; stroke-dasharray: 2 1; opacity: .8; }
.scb { stroke: #3a7ab0; }
.yl path, .yl ellipse { fill: #ff0; stroke: #385d8a; stroke-width: 1; }
.thumbs .push { font-size: 6px; font-weight: 700; text-anchor: middle; }
.thumbs .note { font-size: 5px; }
.kill text { font-size: 13px; text-anchor: middle; }
.dlg text { font-size: 4px; fill: #333; }

.thumbs .shot { display: flex; flex-direction: column; font-size: 3px; line-height: 5px; overflow: hidden; }
.shot i { font-style: normal; }
.s-title { height: 4px; background: #8fb6d6; }
.s-addr { height: 5px; background: #bfd9ec; }
.s-tabs { height: 4px; background: #6f99a6; }
.s-tools { display: flex; gap: 4px; height: 6px; padding-left: 34px; }
.s-chips { display: flex; gap: 1px; height: 5px; justify-content: center; }
.s-chips i { border: 1px solid #555; line-height: 3px; padding: 0 1px; }
.s-chips i:nth-child(1) { border-color: #4040c0; }
.s-chips i:nth-child(2) { border-color: #2a9a3a; }
.s-chips i:nth-child(3) { border-color: #d06a5a; }
.s-find { display: flex; gap: 26px; height: 14px; padding: 3px 3px 0; }
.s-find .go { height: 5px; background: #c6ddea; }
.shot table { width: 230px; margin: 0 5px 0 7px; table-layout: fixed; border-spacing: 0; color: #444; }
.shot th, .shot td { height: 5px; padding: 0; text-align: left; line-height: 5px; white-space: nowrap; }
.shot tr:nth-child(odd) { background: #ececec; }

/* scroll bars */
.sbar {
  flex: none;
  width: 16px;
  display: flex;
  flex-direction: column;
  align-items: center;
  background: #dbe0e8;
  padding: 8px 0 6px;
}
.sbar .up { border: 4px solid transparent; border-top: 0; border-bottom: 5px solid #55585d; }
.sbar .down { border: 4px solid transparent; border-bottom: 0; border-top: 5px solid #55585d; }
.sbar .knob {
  width: 15px;
  height: 146px;
  border: 1px solid #8d929b;
  border-radius: 2px;
  background:
    repeating-linear-gradient(#5f646b 0 1px, transparent 1px 3px) center / 8px 7px no-repeat,
    linear-gradient(90deg, #f5f6f9, #d3d8e0);
}
.grow-a { flex: 442; }
.grow-b { flex: 299; }
.main .knob { height: 55px; }
.main .grow-a { flex: 350; }
.main .grow-b { flex: 402; }
.main { padding-top: 6px; padding-bottom: 16px; }
.main .down { margin-bottom: 10px; }
.dim { justify-content: space-between; padding: 6px 0; opacity: .6; }

/* work area */
.work { flex: 1; min-width: 0; display: flex; flex-direction: column; gap: 4px; }
.stage {
  flex: 1;
  min-height: 0;
  display: flex;
  border: 1px solid #8b8f95;
  border-width: 0 0 1px 1px;
  background: linear-gradient(#cdd0d5, #b7babf);
}
.desk { flex: 1; display: flex; align-items: center; justify-content: center; }
.notes { height: 52px; display: flex; background: #fff; border: 1px solid #8b8f95; border-right: 0; }
.notes textarea { flex: 1; border: 0; resize: none; }

/* slide canvas */
.slide {
  position: relative;
  flex: none;
  width: 1131px;
  height: 848px;
  background: #fff;
  box-shadow: 0 0 3px rgba(60, 64, 70, .7), 2px 3px 12px 3px rgba(60, 64, 70, .55);
  color: #000;
}
.slide > * { position: absolute; }
.shape {
  display: flex;
  align-items: center;
  justify-content: center;
  border: 3px solid #385d8a;
  border-radius: 9px;
  background: #4f81bd;
  color: #fff;
  font: 17px/20px Lato, sans-serif;
  white-space: nowrap;
}
.light { background: linear-gradient(#9fb8e6, #dfe7f6); color: #f4f7fd; }
.t1 { left: 58px; top: 2px; width: 210px; height: 47px; }
.t2 { left: 269px; top: 2px; width: 210px; height: 49px; }
.t3 { left: 476px; top: -1px; width: 210px; height: 50px; }
.t4 { left: 684px; top: 1px; width: 209px; height: 50px; }
.p1 { left: 137px; top: 105px; width: 106px; height: 50px; }
.p2 { left: 245px; top: 105px; width: 96px; height: 50px; }
.p3 { left: 339px; top: 106px; width: 106px; height: 50px; }
.dl-back { left: 903px; top: 121px; width: 210px; height: 50px; }
.dl { left: 903px; top: 125px; width: 210px; height: 50px; }
.save { left: 903px; top: 799px; width: 201px; height: 51px; }
.shape.edit { font-size: 15px; }
.shape.submit { font-size: 12px; }

.k1 { left: 103px; top: 222px; width: 62px; height: 58px; }
.k2 { left: 103px; top: 279px; width: 62px; height: 53px; }
.k3 { left: 103px; top: 330px; width: 62px; height: 48px; }
.k4 { left: 103px; top: 376px; width: 62px; height: 51px; }
.k5 { left: 103px; top: 425px; width: 62px; height: 57px; }
.e1 { left: 57px; top: 222px; width: 59px; height: 58px; }
.e2 { left: 47px; top: 278px; width: 73px; height: 47px; }
.e3 { left: 62px; top: 319px; width: 58px; height: 59px; }
.e4 { left: 58px; top: 366px; width: 60px; height: 59px; }
.e5 { left: 57px; top: 424px; width: 59px; height: 58px; }

.f1 { left: 47px; top: 592px; width: 60px; height: 41px; }
.g1 { left: 106px; top: 592px; width: 59px; height: 41px; }
.f2 { left: 47px; top: 635px; width: 60px; height: 37px; }
.g2 { left: 106px; top: 635px; width: 59px; height: 38px; }
.f3 { left: 47px; top: 671px; width: 60px; height: 38px; }
.g3 { left: 105px; top: 669px; width: 59px; height: 40px; }
.f4 { left: 48px; top: 712px; width: 59px; height: 40px; }
.g4 { left: 105px; top: 712px; width: 59px; height: 40px; }
.f5 { left: 50px; top: 755px; width: 59px; height: 38px; }
.g5 { left: 107px; top: 753px; width: 58px; height: 40px; }

.slide .push {
  left: 3px;
  top: 537px;
  width: 385px;
  height: 36px;
  border: 1px solid #000;
  border-width: 1px 2px 2px 1px;
  background: #ff0;
  font: 700 26px/33px "Noto Sans", sans-serif;
  text-align: center;
}

/* tables on the slide */
.limits, .sefs { table-layout: fixed; border-spacing: 0; border-collapse: separate; }
.limits th, .limits td, .sefs th, .sefs td { padding: 0; }
.slide .gap td { height: 3px; border: 0; line-height: 0; }

.limits { left: 2px; top: 197px; width: 1119px; font: 9px/13px "Open Sans", sans-serif; }
.c36 { width: 36px; } .c44 { width: 44px; } .c45 { width: 45px; } .c55 { width: 55px; }
.c56 { width: 56px; } .c57 { width: 57px; } .c60 { width: 60px; } .c159 { width: 159px; }
.limits td, .limits thead th {
  height: 16px;
  border-right: 1px dotted #000;
  text-align: right;
  padding-right: 4px;
}
.limits thead th {
  height: 26px;
  padding: 2px 0 0;
  border-top: 1px solid #000;
  border-bottom: 1px solid #000;
  background: #bfbfbf;
  text-align: center;
}
.limits tr > :nth-child(2), .limits tr > :nth-child(3), .limits tr > :nth-child(4),
.limits tr > :nth-child(8), .limits tr > :nth-child(11), .limits tr > :nth-child(15),
.limits tr > :nth-child(18), .limits tr > :nth-child(19), .limits tr > :nth-child(21) { border-right-style: solid; }
.limits tr > :nth-child(2) { border-left: 3px double #000; }
.limits tr > :first-child { border: 0; background: none; text-align: left; font-weight: 400; padding: 0; }
.limits tr > .sub { padding-left: 4px; }
.limits .lim td { color: #2173b0; }
.limits td[rowspan], .limits .pct td { border-bottom: 1px solid #000; }
.limits .gap + .lim td { border-top: 1px solid #000; height: 17px; }
.limits .pct td { padding-right: 2px; }
.limits .dash { padding-right: 14px; }
.limits .pct .err { position: relative; padding: 0; text-align: center; }
.err::before {
  content: "";
  position: absolute;
  left: 0;
  top: 0;
  border-top: 4px solid #1a7a2a;
  border-right: 4px solid transparent;
}
.warn { background: #ffc000; }

.sefs { left: 163px; top: 556px; width: 875px; font: 13px/13px "Noto Sans", sans-serif; }
.c72 { width: 72px; } .c92 { width: 92px; } .c93 { width: 93px; } .c247 { width: 247px; }
.sefs th, .sefs td { border-right: 1px dotted #000; text-align: right; }
.sefs th:first-child, .sefs td:first-child { border-left: 1px solid #000; border-right-style: solid; text-align: left; }
.sefs th:first-child { padding-left: 2px; }
.sefs td:first-child { padding-left: 5px; }
.sefs tr > :nth-child(6) { border-right: 2px solid #000; }
.sefs tr > :nth-child(7) { border-right: 1px solid #000; }
.sefs tr > :nth-child(8) { border-right: 1px solid #000; padding-right: 4px; }
.sefs thead th { height: 28px; border-top: 1px solid #000; border-bottom: 1px solid #000; text-align: center; font-size: 12px; line-height: 13px; }
.sefs thead td:first-child { border-left: 0; }
.sefs thead .util { text-align: left; padding-left: 2px; }
.sefs tbody td { height: 19px; border-bottom: 1px solid #000; }
.sefs [class^="n"] > * { border-top: 1px solid #000; border-bottom: 0; line-height: 12px; }
.sefs .n1 > * { height: 14px; }
.sefs .n2 > * { height: 15px; }
.sefs .n3 > * { height: 18px; }
.sefs tbody tr > :nth-child(7) { border-top: 0; border-bottom: 0; }
.sefs tr.gap td:first-child { height: 5px; border: 0; }
.sefs tr.tall td:first-child { height: 14px; }
.sefs span { display: block; margin: 0 6px; border-bottom: 1px solid #2173b0; color: #2173b0; }

/* callouts */
.callout { width: 236px; height: 142px; }
.callout path { fill: #ff0; stroke: #385d8a; stroke-width: 3; stroke-linejoin: round; }
.words {
  position: absolute;
  inset: 0 74px auto 0;
  height: 120px;
  display: flex;
  align-items: center;
  justify-content: center;
  text-align: center;
  font: 14px/19px Lato, sans-serif;
}
.callout u { text-decoration: underline wavy #e02020 1px; }
.a { left: 373px; top: 406px; }
.b { left: 604px; top: 392px; }
.c { left: 800px; top: 392px; }

/* status bar */
.status {
  flex: none;
  display: flex;
  align-items: center;
  height: 23px;
  padding: 0 5px 0 0;
  background: linear-gradient(#e4e6e8, #c3c7cc 60%, #b4b8be);
  border-bottom: 1px solid #565b63;
}
.status span { padding: 0 9px 0 8px; border-right: 1px solid #989ca2; }
.views { margin-left: auto; display: flex; padding-left: 4px; border-left: 1px solid #70747a; }
.views button { width: 19px; height: 20px; display: grid; place-items: center; }
.views .on { background: #ffd964; border: 1px solid #c9962a; border-radius: 3px; }
.status output { width: 42px; text-align: center; }
.zoom { display: flex; align-items: center; }
.zoom input { width: 100px; height: 16px; margin: 0; appearance: none; background: linear-gradient(#777b82, #777b82) center / 100% 1px no-repeat; }
.zoom input::-webkit-slider-thumb {
  appearance: none;
  width: 9px;
  height: 13px;
  border: 1px solid #666a70;
  border-radius: 1px 1px 5px 5px;
  background: #f6f6f6;
}
.fit { margin-left: 9px; }

/* taskbar */
.taskbar {
  flex: none;
  display: flex;
  gap: 3px;
  height: 7px;
  overflow: hidden;
  background: linear-gradient(90deg, #7e97b7, #a6c1e0 8%, #a6c1e0 80%, #7688a6 84%, #66788f);
}
.orb { flex: none; width: 32px; height: 32px; margin: 0 10px 0 11px; border-radius: 50%; background: #8fb3d2; border: 2px solid #3e5c7e; }
.item { flex: none; width: 59px; height: 20px; padding-top: 3px; }
.item.on { background: #cfe0f1; border: 1px solid #42566f; border-radius: 3px; padding-top: 2px; }
.item b { display: block; width: 26px; height: 26px; margin: 0 auto; border-radius: 50%; }
.item .sheet { width: 28px; border-radius: 2px; }
.teal { background: #35a6b8; } .cyan { background: #3aa5d8; } .violet { border: 3px solid #4a3878; background: #eee; }
.green { background: #5fc48c; } .gold { background: #e8c04c; } .sand { background: #b8b49a; }
.grey { border: 3px solid #6d7480; background: #dde; } .red { background: #c4484c; } .aqua { background: #5cb8c0; }
.plum { background: #4b3552; } .haze { background: #8fa6c8; } .pad { background: #d0d0d0; }
.rust { background: #e08a58; } .blue { background: #1d48b8; }
.peek { width: 14px; margin-left: auto; background: #8a96a8; border: 1px solid #3d4653; }
```
